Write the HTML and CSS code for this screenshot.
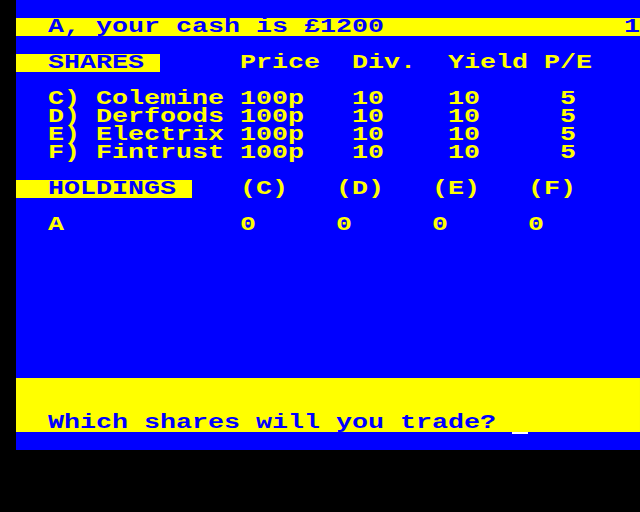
FILE: index.html
```html
<!DOCTYPE html>
<html>
<head>
<meta charset="utf-8">
<link rel="stylesheet" href="styles.css">
</head>
<body>
<div class="screen">
<div class="row"> </div>
<div class="row inv">  A, your cash is £1200               1</div>
<div class="row"> </div>
<div class="row"><span class="bar">  SHARES </span>     Price  Div.  Yield P/E</div>
<div class="row"> </div>
<div class="row">  C) Colemine 100p   10    10     5</div>
<div class="row">  D) Derfoods 100p   10    10     5</div>
<div class="row">  E) Electrix 100p   10    10     5</div>
<div class="row">  F) Fintrust 100p   10    10     5</div>
<div class="row"> </div>
<div class="row"><span class="bar">  HOLDINGS </span>   (C)   (D)   (E)   (F)</div>
<div class="row"> </div>
<div class="row">  A           0     0     0     0</div>
<div class="row"> </div>
<div class="row"> </div>
<div class="row"> </div>
<div class="row"> </div>
<div class="row"> </div>
<div class="row"> </div>
<div class="row"> </div>
<div class="row"> </div>
<div class="row inv"> </div>
<div class="row inv"> </div>
<div class="row inv">  Which shares will you trade? </div>
<div class="row">                               <span class="cursor"></span></div>
</div>
</body>
</html>
```
FILE: styles.css
```css
html, body {
  margin: 0;
  padding: 0;
  background: #000;
}
.screen {
  margin-left: 16px;
  width: 624px;
  height: 450px;
  background: #0000ff;
  overflow: hidden;
}
.row {
  width: 468px;
  height: 18px;
  line-height: 18px;
  font-family: "Liberation Mono", monospace;
  font-weight: bold;
  font-size: 20px;
  letter-spacing: 0;
  white-space: pre;
  color: #ffff00;
  transform: scaleX(1.3333);
  transform-origin: 0 0;
}
.inv {
  background: #ffff00;
  color: #0000ff;
}
.bar {
  display: inline-block;
  height: 18px;
  background: #ffff00;
  color: #0000ff;
  vertical-align: top;
}
.cursor {
  display: inline-block;
  width: 12px;
  height: 2px;
  background: #ffffff;
  vertical-align: top;
}
```
